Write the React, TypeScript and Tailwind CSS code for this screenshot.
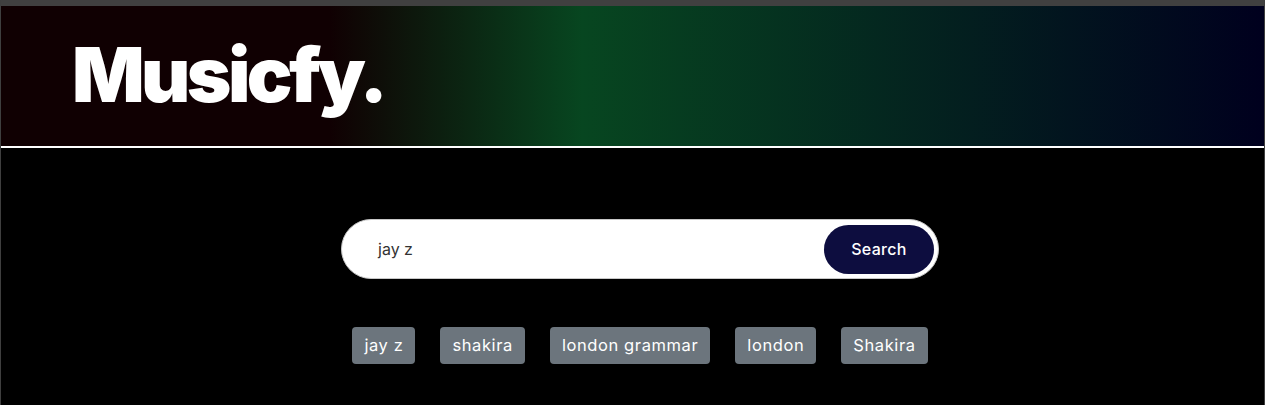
import React from "react";

const tags = ["jay z", "shakira", "london grammar", "london", "Shakira"];

export default function App() {
  return (
    <div
      className="min-h-[405px] bg-black border-x border-[#3f3f3f]"
      style={{ fontFamily: "Inter, 'Noto Sans', sans-serif" }}
    >
      <div className="h-[6px] bg-[#404040]" />
      <header className="h-[142px] bg-[linear-gradient(90deg,#100002_26%,#074620_46%,#00001e_100%)] flex items-center pl-[71px] border-b-2 border-white">
        <h1 className="text-[76px] font-black text-white tracking-[-3.6px] leading-none -mt-[5px]">
          Musicfy.
        </h1>
      </header>
      <main className="pl-[15px] flex flex-col items-center pt-[71px]">
        <div className="w-[598px] h-[60px] bg-white rounded-full border border-[#c8c8c8] flex items-center pl-[36px] pr-[4px]">
          <span className="flex-1 text-[16px] text-[#333333]">jay z</span>
          <button className="w-[110px] h-[49px] rounded-full bg-[#0d0d3f] text-white text-[16px] font-medium tracking-[0.3px]">
            Search
          </button>
        </div>
        <div className="flex gap-[25px] mt-[48px]">
          {tags.map((t, i) => (
            <span
              key={i}
              className="h-[37px] px-[12px] flex items-center rounded-[4px] bg-[#6c757d] text-white text-[16.5px] tracking-[0.6px]"
            >
              {t}
            </span>
          ))}
        </div>
      </main>
    </div>
  );
}
